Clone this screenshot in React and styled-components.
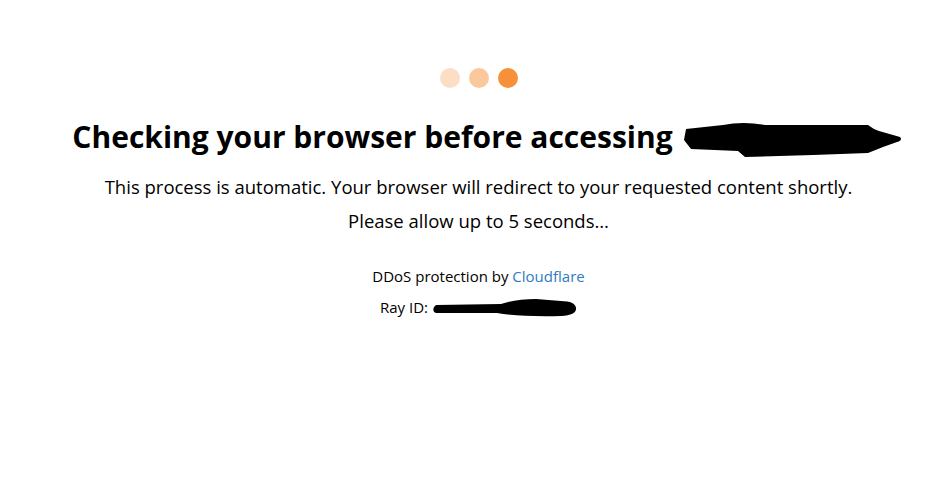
import React from "react";
import styled, { createGlobalStyle } from "styled-components";

const GlobalStyle = createGlobalStyle`
	html, body {
		margin: 0;
		padding: 0;
		background: #ffffff;
	}
	body {
		font-family: "Open Sans", "Noto Sans", "DejaVu Sans", sans-serif;
		color: #000;
	}
`;

const Page = styled.div`
	display: flex;
	flex-direction: column;
	align-items: center;
	padding: 68px 0 0 8px;
	text-align: center;
`;

const Loader = styled.div`
	display: flex;
	gap: 9px;
	margin-bottom: 26px;
`;

const Dot = styled.span`
	width: 20px;
	height: 20px;
	border-radius: 50%;
	background: #f6913a;
	opacity: ${(props) => props.op};
`;

const Title = styled.h1`
	display: flex;
	align-items: center;
	margin: 0;
	font-size: 30px;
	font-weight: 700;
	line-height: 40px;
	white-space: nowrap;

	svg {
		flex-shrink: 0;
		margin-left: 10px;
		margin-right: -18px;
		margin-top: 6px;
	}
`;

const Text = styled.p`
	margin: ${(props) => props.mt || 0}px 0 0;
	font-size: ${(props) => props.size || 18.5}px;
	line-height: ${(props) => props.lh || 34}px;
	white-space: nowrap;
`;

const Link = styled.a`
	color: #2f7bbf;
	text-decoration: none;
`;

const Ray = styled.p`
	display: flex;
	align-items: center;
	margin: 9px 0 0;
	font-size: 15px;
	line-height: 20px;

	svg {
		flex-shrink: 0;
		margin-left: 3px;
		margin-top: 2px;
	}
`;

function HeadingScribble() {
	return (
		<svg width="220" height="40" viewBox="0 0 220 40">
			<path
				d="M3 9 L40 5 Q60 1 82 5 L150 5 L185 5 Q190 9 196 11 L217 17 Q220 20 214 22 L200 27 L185 33 L130 35 L62 37 L55 31 L8 29 L1 20 Z"
				fill="#000"
			/>
		</svg>
	);
}

function RayScribble() {
	return (
		<svg width="146" height="18" viewBox="0 0 146 18">
			<path
				d="M3 8 Q1 13 5 14 L66 14 Q90 18 130 17 Q146 16 145 9 Q144 2 130 2 L105 0 Q85 0 70 5 L5 6 Z"
				fill="#000"
			/>
		</svg>
	);
}

export default function App() {
	return (
		<>
			<GlobalStyle />
			<Page>
				<Loader>
					<Dot op={0.3} />
					<Dot op={0.5} />
					<Dot op={1} />
				</Loader>
				<Title>
					Checking your browser before accessing
					<HeadingScribble />
				</Title>
				<Text mt={10}>
					This process is automatic. Your browser will redirect to your
					requested content shortly.
				</Text>
				<Text>Please allow up to 5 seconds…</Text>
				<Text mt={26} size={15} lh={24}>
					DDoS protection by <Link href="#">Cloudflare</Link>
				</Text>
				<Ray>
					Ray ID:
					<RayScribble />
				</Ray>
			</Page>
		</>
	);
}
